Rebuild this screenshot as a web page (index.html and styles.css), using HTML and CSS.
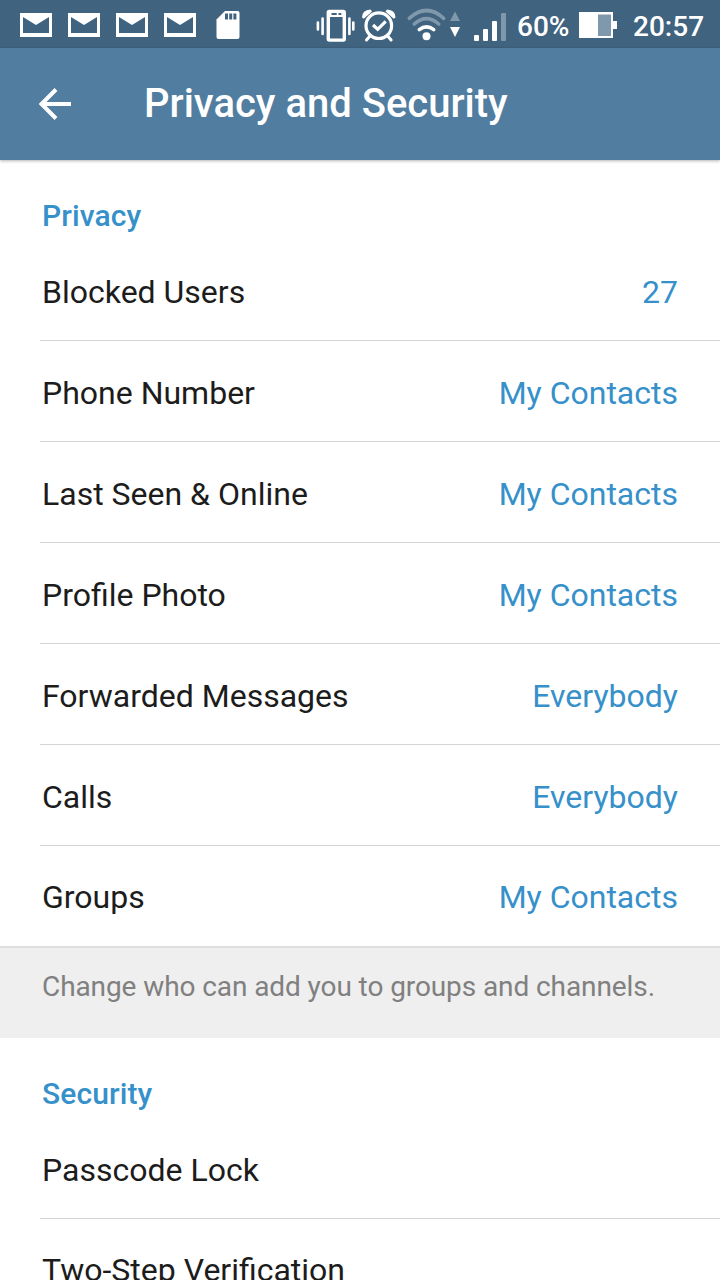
FILE: index.html
```
<!DOCTYPE html>
<html lang="en">
  <head>
    <meta charset="UTF-8" />
    <meta name="viewport" content="width=device-width, initial-scale=1.0" />
    <title>Privacy and Security</title>
    <link rel="stylesheet" href="styles.css">
  </head>
  <body>
    <svg class="symbols">
      <symbol id="mail" viewBox="0 0 32 24">
        <path fill="#fff" fill-rule="evenodd" d="M0 0h32v24H0zM3 4v16h26V4L16 12z" />
      </symbol>
    </svg>
    <div class="status-bar">
      <div class="notifications">
        <svg width="32" height="24"><use href="#mail" /></svg>
        <svg width="32" height="24"><use href="#mail" /></svg>
        <svg width="32" height="24"><use href="#mail" /></svg>
        <svg width="32" height="24"><use href="#mail" /></svg>
        <svg class="sd" width="24" height="28" viewBox="0 0 24 28">
          <path fill="#fff" d="M9 0h12.500q2 0 2 2v24q0 2-2 2h-19q-2 0-2-2V8.500z" />
          <path fill="#40637f" d="M9 2.500h3v6H9zM13.200 2.500h3v6h-3zM17.400 2.500h3v6h-3z" />
        </svg>
      </div>
      <div class="system">
        <svg width="198" height="48" viewBox="312 0 198 48">
          <!-- vibrate -->
          <g fill="none" stroke="#fff">
            <rect x="328.300" y="11.500" width="16" height="28.600" rx="1" stroke-width="3.400" />
            <path stroke-width="5" d="M328 14.500h17" />
            <path stroke-width="2.600" stroke-linecap="round" d="M317.900 22.500v7M322.600 18.500v15.500M349.400 18.500v15.500M353.300 22.500v7" />
          </g>
          <path fill="#40637f" d="M331.500 13h5.200v2h-5.200zM338.500 13h2.800v2h-2.800z" />
          <!-- alarm -->
          <g fill="none" stroke="#fff" stroke-linecap="round">
            <circle cx="378.800" cy="25.700" r="12.800" stroke-width="3.200" />
            <path stroke-width="3.200" stroke-linecap="butt" d="M373 25l4.700 4.300 8-8" />
            <path stroke-width="3" d="M370 36l-3.500 4M387.600 36l3.500 4" />
          </g>
          <path fill="#fff" d="M362 17.500q0-7.500 8.500-8l1.500 2-8.200 7.200zM395.500 17.500q0-7.500-8.500-8l-1.500 2 8.200 7.200z" />
          <!-- wifi -->
          <circle fill="#fff" cx="426.500" cy="36.300" r="4" />
          <g fill="none" stroke-width="3.600" stroke-linecap="round">
            <path stroke="#7f98ab" d="M409.300 18.300q17.200-15.600 34.400 0" />
            <path stroke="#7f98ab" d="M414.300 24q12.200-10.800 24.400 0" />
            <path stroke="#fff" d="M419.300 29.600q7.200-5.600 14.400 0" />
          </g>
          <path fill="#7f98ab" d="M455 11.500l5 9.500h-10z" />
          <path fill="#fff" d="M455 37l5-10h-10z" />
          <!-- signal -->
          <g fill="#fff">
            <rect x="474" y="35" width="5" height="6" rx="1" />
            <rect x="483" y="29" width="5" height="12" rx="1" />
            <rect x="492" y="21" width="5" height="20" rx="1" />
            <rect x="501" y="13" width="5" height="28" rx="1" fill="#7f98ab" />
          </g>
        </svg>
        <span class="percent">60%</span>
        <svg class="battery" width="38" height="26" viewBox="0 0 38 26">
          <path fill="#fff" d="M0 0h34v9h4v8h-4v9H0z" />
          <path fill="#7f98ab" d="M19 2.500h13v21.500H19z" />
        </svg>
        <span class="time">20:57</span>
      </div>
    </div>
    <div class="header">
      <svg class="back" width="34" height="34" viewBox="0 0 34 34">
        <path fill="none" stroke="#fff" stroke-width="4" d="M33 17H4M18 2.500L3.500 17 18 31.500" />
      </svg>
      <h1>Privacy and Security</h1>
    </div>
    <h2>Privacy</h2>
    <ul class="list">
      <li>Blocked Users <span class="value">27</span></li>
      <li>Phone Number <span class="value">My Contacts</span></li>
      <li>Last Seen &amp; Online <span class="value">My Contacts</span></li>
      <li>Profile Photo <span class="value">My Contacts</span></li>
      <li>Forwarded Messages <span class="value">Everybody</span></li>
      <li>Calls <span class="value">Everybody</span></li>
      <li>Groups <span class="value">My Contacts</span></li>
    </ul>
    <p class="info">Change who can add you to groups and channels.</p>
    <h2>Security</h2>
    <ul class="list">
      <li>Passcode Lock</li>
      <li>Two-Step Verification</li>
    </ul>
  </body>
</html>
```
FILE: styles.css
```
* {
  box-sizing: border-box;
}
html,
body {
  height: 100%;
}
body {
  margin: 0;
  overflow: hidden;
  background: #fff;
  color: #1c1c1c;
  font-family: Roboto, sans-serif;
}
svg {
  display: block;
  flex: none;
}
.symbols {
  display: none;
}
.status-bar {
  display: flex;
  justify-content: space-between;
  height: 48px;
  padding: 0 15px 0 20px;
  background: #40637f;
  color: #fff;
  font-size: 28px;
  font-weight: 500;
}
.notifications,
.system {
  display: flex;
  align-items: center;
}
.notifications {
  gap: 16px;
  padding-top: 2px;
}
.sd {
  margin-left: 4px;
}
.percent {
  width: 62px;
  padding: 4px 0 0 7px;
}
.battery {
  margin: 2px 16px 0 7px;
}
.time {
  width: 72px;
  padding-top: 4px;
}
.header {
  display: flex;
  align-items: center;
  height: 112px;
  padding-left: 38px;
  background: #507da0;
  box-shadow: 0 1px 3px rgba(0, 0, 0, 0.3);
}
h1 {
  margin: 0 0 2px 72px;
  color: #fff;
  font-size: 40px;
  font-weight: 500;
}
h2 {
  height: 80px;
  margin: 0;
  padding: 16px 42px 0;
  color: #3690ca;
  font-size: 30px;
  font-weight: 500;
  line-height: 80px;
  letter-spacing: 0.1px;
}
.list {
  margin: 0;
  padding: 0 0 0 40px;
  list-style-type: none;
}
.list li {
  display: flex;
  justify-content: space-between;
  height: 101px;
  padding: 2px 42px 0 2px;
  border-bottom: 1px solid #d5d5d5;
  font-size: 32px;
  line-height: 100px;
}
.list li:last-child {
  height: 100px;
  border-bottom: 0;
  line-height: 98px;
}
.value {
  color: #3690ca;
}
.info {
  height: 92px;
  margin: 0;
  padding: 0 42px;
  border-top: 2px solid #dedede;
  background: #efefef;
  color: #808080;
  font-size: 28px;
  line-height: 78px;
  letter-spacing: -0.09px;
}
```
